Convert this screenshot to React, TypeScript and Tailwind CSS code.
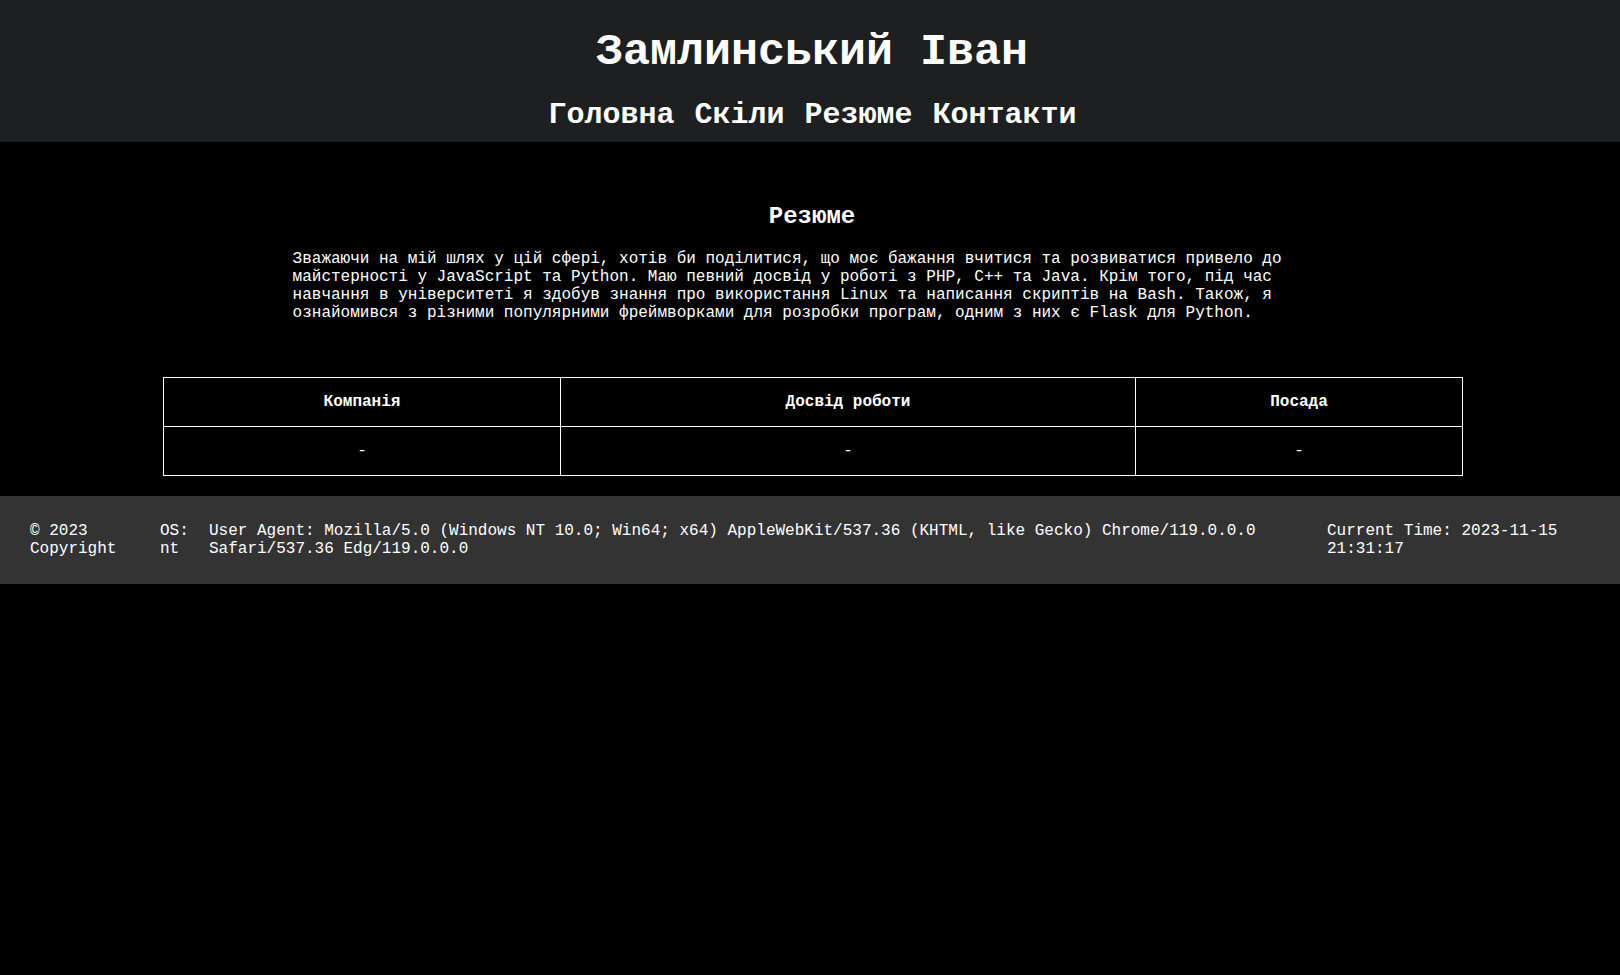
const font = { fontFamily: '"Liberation Mono", "Courier New", monospace' };

const navItems = ['Головна', 'Скіли', 'Резюме', 'Контакти'];

function Header() {
  return (
    <header className="bg-[#1e1f21] text-white text-center pt-[28px] pb-[10px]">
      <h1 className="ml-[4px] text-[45px] leading-[50px] font-bold">Замлинський Іван</h1>
      <nav className="mt-[20px] ml-[5px] flex justify-center gap-[20px]">
        {navItems.map((item) => (
          <a key={item} href="#" className="text-[30px] leading-[34px] font-bold text-white">
            {item}
          </a>
        ))}
      </nav>
    </header>
  );
}

function Resume() {
  return (
    <section className="pt-[61px]">
      <h2 className="text-center ml-[4px] text-[24px] leading-[27px] font-bold">Резюме</h2>
      <p className="w-[64%] mx-auto mt-[20px] pl-[1px] text-[16px] leading-[18px]">
        Зважаючи на мій шлях у цій сфері, хотів би поділитися, що моє бажання вчитися та розвиватися привело до
        майстерності у JavaScript та Python. Маю певний досвід у роботі з PHP, C++ та Java. Крім того, під час
        навчання в університеті я здобув знання про використання Linux та написання скриптів на Bash. Також, я
        ознайомився з різними популярними фреймворками для розробки програм, одним з них є Flask для Python.
      </p>
      <table className="w-[1299px] ml-[163px] mt-[55px] table-fixed border-collapse border border-white text-[16px] leading-[18px]">
        <colgroup>
          <col className="w-[397px]" />
          <col className="w-[575px]" />
          <col className="w-[327px]" />
        </colgroup>
        <thead>
          <tr>
            <th className="border border-white py-[15px] font-bold">Компанія</th>
            <th className="border border-white py-[15px] font-bold">Досвід роботи</th>
            <th className="border border-white py-[15px] font-bold">Посада</th>
          </tr>
        </thead>
        <tbody>
          <tr>
            <td className="border border-white py-[15px] text-center">-</td>
            <td className="border border-white py-[15px] text-center">-</td>
            <td className="border border-white py-[15px] text-center">-</td>
          </tr>
        </tbody>
      </table>
    </section>
  );
}

function Footer() {
  return (
    <footer className="mt-[20px] bg-[#333333] text-white px-[30px] py-[26px] flex text-[16px] leading-[18px]">
      <div className="w-[130px] shrink-0 pr-[30px]">© 2023 Copyright</div>
      <div className="w-[49px] shrink-0 pr-[15px]">OS: nt</div>
      <div className="w-[1118px] shrink-0 pr-[60px]">
        User Agent: Mozilla/5.0 (Windows NT 10.0; Win64; x64) AppleWebKit/537.36 (KHTML, like Gecko) Chrome/119.0.0.0
        Safari/537.36 Edg/119.0.0.0
      </div>
      <div className="flex-1">Current Time: 2023-11-15 21:31:17</div>
    </footer>
  );
}

export default function App() {
  return (
    <div className="min-h-screen bg-black text-white" style={font}>
      <Header />
      <main>
        <Resume />
      </main>
      <Footer />
    </div>
  );
}
